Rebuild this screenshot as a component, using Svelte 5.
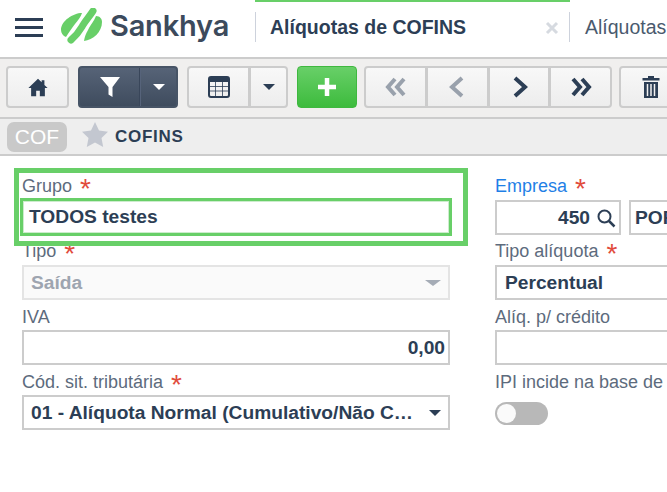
<script>
  const navs = [
    { d: 'M12 4 5 12l7 8M21 4l-7 8 7 8', off: true },
    { d: 'M17 3 7 12l10 9', off: true },
    { d: 'M8 3l10 9-10 9', off: false },
    { d: 'M4 4l7 8-7 8M13 4l7 8-7 8', off: false }
  ];
</script>

<div class="page">
  <header class="top">
    <button class="burger" aria-label="Menu"><span></span><span></span><span></span></button>
    <svg class="mark" viewBox="0 0 42 37" width="42" height="37" aria-hidden="true">
      <path d="M21 5C12 5 0 13 0 22c0 3 2 6 5 7 3-5 6-9 9-13s6-7 7-11z" fill="#68cf68"/>
      <path d="M32 3c-4 6-7 9-10 14s-5 9-12 15" fill="none" stroke="#68cf68" stroke-width="7" stroke-linecap="round"/>
      <path d="M35 8c-2 5-5 8-7 12s-4 7-5 13c9-1 18-9 18-19 0-3-2-6-6-6z" fill="#68cf68"/>
    </svg>
    <span class="brand">Sankhya</span>
    <div class="tab active">
      <span class="tab-title">Alíquotas de COFINS</span>
      <svg class="close" viewBox="0 0 14 14" width="14" height="14" aria-hidden="true"><path d="M2 2l10 10M12 2 2 12" stroke="#d6dae0" stroke-width="3"/></svg>
    </div>
    <div class="tab next"><span>Alíquotas</span></div>
  </header>

  <div class="toolbar">
    <button class="btn home" aria-label="Início">
      <svg viewBox="0 0 24 24" width="22" height="22" aria-hidden="true"><path d="M12 3 1.500 13h3v9h5.500v-6h4v6H19.500v-9h3L19 9.700V4.500h-3v2.300z" fill="#2c3e55"/></svg>
    </button>
    <div class="group dark">
      <button class="seg first" aria-label="Filtro">
        <svg viewBox="0 0 20 22" width="20" height="22" aria-hidden="true"><path d="M0 1h20L12.500 11v10l-4-2.500V11z" fill="#fff"/></svg>
      </button>
      <button class="seg caret-btn" aria-label="Opções"><i class="caret white"></i></button>
    </div>
    <div class="group">
      <button class="seg first table" aria-label="Tabela">
        <svg viewBox="0 0 22 22" width="22" height="22" aria-hidden="true">
          <rect x="1" y="1" width="20" height="20" rx="2" fill="none" stroke="#2c3e55" stroke-width="2"/>
          <rect x="1" y="1" width="20" height="5" fill="#2c3e55"/>
          <path d="M1 10.500h20M1 15h20M7.500 6v15M14.500 6v15" stroke="#2c3e55" stroke-width=".8"/>
        </svg>
      </button>
      <button class="seg caret-btn" aria-label="Opções"><i class="caret"></i></button>
    </div>
    <button class="btn add" aria-label="Adicionar">
      <svg viewBox="0 0 20 20" width="20" height="20" aria-hidden="true"><path d="M10 1v18M1 10h18" stroke="#fff" stroke-width="4.500"/></svg>
    </button>
    <div class="group nav">
      {#each navs as n}
        <button class="seg nav-btn" aria-label="Navegar">
          <svg viewBox="0 0 24 24" width="24" height="24" aria-hidden="true"><path d={n.d} fill="none" stroke={n.off ? '#99a1ac' : '#2c3e55'} stroke-width="4"/></svg>
        </button>
      {/each}
    </div>
    <button class="btn trash" aria-label="Excluir">
      <svg viewBox="0 0 18 24" width="18" height="24" aria-hidden="true">
        <path d="M6 3V1h6v2h5.500v2.500H.5V3z" fill="#2c3e55"/>
        <path d="M2 7h14v16H2z" fill="#2c3e55"/>
        <path d="M5.500 9v12M9 9v12M12.500 9v12" stroke="#f2f2f2" stroke-width="1.500"/>
      </svg>
    </button>
  </div>

  <div class="subbar">
    <span class="badge">COF</span>
    <svg class="star" viewBox="0 0 26 25" width="26" height="25" aria-hidden="true"><path d="M13 0l4 8.500 9 1.200-6.500 6.300 1.700 9L13 20.500 4.800 25l1.700-9L0 9.700 9 8.500z" fill="#c3c7d0"/></svg>
    <span class="sub-title">COFINS</span>
  </div>

  <main class="form">
    <div class="col left">
      <div class="field">
        <span class="label">Grupo <b>*</b></span>
        <div class="box focus">TODOS testes</div>
      </div>
      <div class="field">
        <span class="label">Tipo <b>*</b></span>
        <div class="box disabled"><span>Saída</span><i class="caret grey"></i></div>
      </div>
      <div class="field">
        <span class="label">IVA</span>
        <div class="box right">0,00</div>
      </div>
      <div class="field">
        <span class="label">Cód. sit. tributária <b>*</b></span>
        <div class="box"><span>01 - Alíquota Normal (Cumulativo/Não C…</span><i class="caret"></i></div>
      </div>
    </div>
    <div class="col rightcol">
      <div class="field">
        <span class="label blue">Empresa <b>*</b></span>
        <div class="pair">
          <div class="box code">450
            <svg viewBox="0 0 20 20" width="20" height="20" aria-hidden="true"><circle cx="8.500" cy="8.500" r="6" fill="none" stroke="#2c3e55" stroke-width="2"/><path d="M13 13l5.500 5.500" stroke="#2c3e55" stroke-width="2.500"/></svg>
          </div>
          <div class="box name">POR</div>
        </div>
      </div>
      <div class="field">
        <span class="label">Tipo alíquota <b>*</b></span>
        <div class="box wide">Percentual</div>
      </div>
      <div class="field">
        <span class="label">Alíq. p/ crédito</span>
        <div class="box wide"></div>
      </div>
      <div class="field">
        <span class="label">IPI incide na base de</span>
        <div class="switch"><span></span></div>
      </div>
    </div>
    <div class="highlight"></div>
  </main>
</div>

<style>
  :global(body) { margin: 0; background: #fff; }
  .page {
    width: 667px; height: 492px; overflow: hidden; position: relative;
    font-family: "Liberation Sans", Arial, sans-serif; color: #2c3e55;
  }
  button { padding: 0; font: inherit; cursor: pointer; display: flex; align-items: center; justify-content: center; }

  .top { height: 57px; display: flex; align-items: flex-start; }
  .burger {
    width: 28px; height: 19px; margin: 18px 0 0 15px; border: 0; background: none;
    flex-direction: column; justify-content: space-between;
  }
  .burger span { display: block; width: 28px; height: 3px; background: #2c3e55; }
  .mark { margin: 8px 0 0 18px; flex: none; }
  .brand {
    margin: 8px 0 0 7px; width: 145px; flex: none;
    font-family: Inter, sans-serif; font-weight: 600; font-size: 29px; line-height: 36px; color: #3c4a5c;
    letter-spacing: -.2px;
  }
  .tab { height: 55px; display: flex; align-items: flex-start; flex: none; }
  .tab.active {
    width: 315px; box-sizing: border-box; border-top: 2px solid #68cf68; position: relative;
    padding: 13px 0 0 15px; font-weight: 700; font-size: 19.5px; line-height: 24px;
  }
  .tab.active::before {
    content: ""; position: absolute; left: 0; top: 10px; width: 1px; height: 30px; background: #cdd2dc;
  }
  .tab.active::after {
    content: ""; position: absolute; right: 0; top: 10px; width: 1px; height: 30px; background: #cdd2dc;
  }
  .tab-title { width: 275px; flex: none; }
  .close { margin-top: 6px; flex: none; }
  .tab.next { padding: 15px 0 0 15px; font-size: 19.5px; line-height: 24px; color: #4a5a6e; white-space: nowrap; }

  .toolbar {
    height: 62px; box-sizing: border-box; padding: 7px 0 0 6px; display: flex; align-items: flex-start;
    background: #f0efee; border-top: 2px solid #ccc; border-bottom: 2px solid #ccc;
  }
  .btn, .group {
    height: 42px; box-sizing: border-box; border: 2px solid #ccc; border-radius: 4px;
    background: linear-gradient(#f8f8f8, #ededed); flex: none;
  }
  .home { width: 63px; }
  .group { display: flex; margin-left: 9px; overflow: hidden; }
  .seg { border: 0; background: none; height: 100%; box-sizing: border-box; }
  .dark { width: 100px; background: linear-gradient(#566377, #3f4c5e); border-color: #475466; }
  .dark .first { width: 60px; border-right: 1px solid #39465a; }
  .dark .caret-btn { flex: 1; border-left: 1px solid #56637a; }
  .group:not(.dark):not(.nav) { width: 101px; }
  .table { width: 62px; border-right: 3px solid #ccc; }
  .group:not(.dark):not(.nav) .caret-btn { flex: 1; }
  .add {
    width: 60px; margin-left: 9px; border: 1px solid #3fb83f; background: linear-gradient(#68cf68, #3dbb3d);
  }
  .nav { width: 248px; margin-left: 7px; }
  .nav-btn { flex: 1; border-right: 3px solid #ccc; }
  .nav-btn:last-child { border-right: 0; }
  .trash { width: 70px; margin-left: 7px; justify-content: flex-start; padding-left: 21px; }

  .caret {
    display: block; width: 0; height: 0; border-style: solid; border-width: 6px 6px 0; border-color: #2c3e55 transparent transparent;
    flex: none;
  }
  .caret.white { border-top-color: #fff; }
  .caret.grey { border-top-color: #a5acb6; border-width: 6px 8px 0; }

  .subbar {
    height: 37px; box-sizing: border-box; display: flex; align-items: center;
    padding: 0 0 0 7px; background: #eeeeee; border-bottom: 2px solid #ccc;
  }
  .badge {
    width: 60px; height: 30px; border-radius: 7px; background: #c9c9c9; color: #fff;
    font-size: 21px; line-height: 30px; text-align: center;
  }
  .star { margin-left: 15px; margin-top: -4px; }
  .sub-title { margin-left: 7px; font-weight: 700; font-size: 17px; letter-spacing: .7px; padding-top: 1px; }

  .form { position: relative; display: flex; padding: 21px 0 0 22px; }
  .col { display: flex; flex-direction: column; flex: none; }
  .left { width: 428px; }
  .rightcol { width: 300px; margin-left: 45px; }
  .field { height: 65px; }
  .label { display: block; height: 23px; font-size: 18px; line-height: 18px; color: #5d6b7d; white-space: nowrap; }
  .field:nth-child(n+3) .label { height: 22px; padding-top: 1px; }
  .label b { color: #e14b3c; font-size: 28px; line-height: 16px; font-weight: 400; margin-left: 3px; vertical-align: -6px; }
  .blue { color: #1f7fe6; }

  .box {
    height: 35px; box-sizing: border-box; border: 2px solid #ccc; display: flex; align-items: center;
    padding: 0 7px; font-size: 19.2px; font-weight: 700; color: #2c3e55; background: #fff;
    justify-content: space-between; white-space: nowrap;
  }
  .focus {
    justify-content: flex-start; margin: -2px 0 0 -2px; width: 432px; height: 38px;
    border: 3px solid #68cf68; outline: 1px solid #cdeccd; outline-offset: -4px; padding-left: 6px;
  }
  .disabled { background: #fafafa; border-color: #e4e4e4; color: #9ea5b0; }
  .right { justify-content: flex-end; padding-right: 3px; }
  .pair { display: flex; gap: 8px; }
  .code { width: 126px; flex: none; justify-content: flex-end; gap: 6px; padding-right: 3px; }
  .name { flex: 1; justify-content: flex-start; padding-left: 4px; }
  .wide { justify-content: flex-start; padding-left: 8px; }
  .switch { width: 53px; height: 23px; margin-top: 7px; border-radius: 12px; background: #b8b8b8; padding: 2px; box-sizing: border-box; }
  .switch span { display: block; width: 19px; height: 19px; border-radius: 50%; background: #fafafa; }

  .highlight {
    position: absolute; left: 14px; top: 12px; width: 454px; height: 78px;
    box-sizing: border-box; border: 5px solid #68cf68; pointer-events: none;
  }
</style>
